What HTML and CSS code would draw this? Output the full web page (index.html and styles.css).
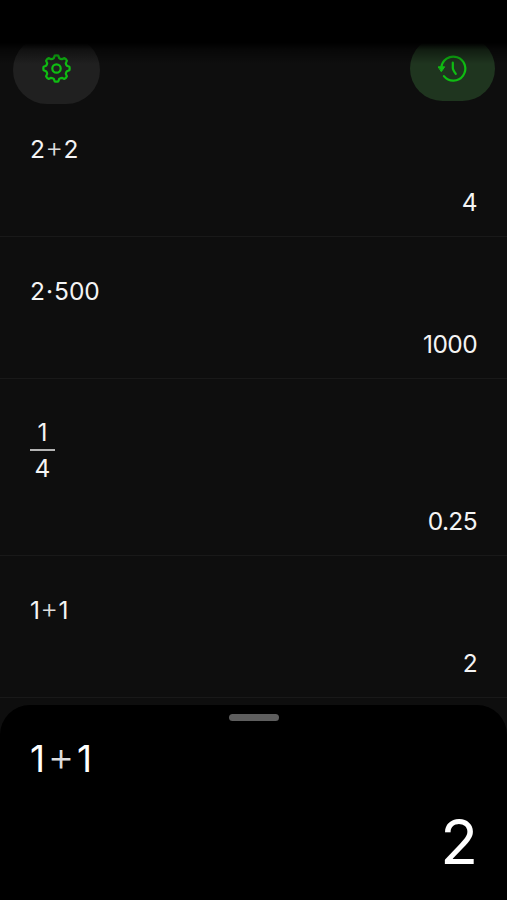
FILE: index.html
```html
<!DOCTYPE html>
<html lang="en">
<head>
<meta charset="utf-8">
<title>Calculator</title>
<link rel="stylesheet" href="styles.css">
</head>
<body>
<div class="screen">
  <div class="fade"></div>
  <header class="toolbar">
    <button class="tool" aria-label="Settings">
      <svg width="30" height="30" viewBox="-14.5 -14.5 30 30">
        <path d="M-1.8-12.9Q0-13.4 1.8-12.9L2.7-10.4Q3.9-9.4 5.4-9.3L7.8-10.4Q9.6-9.6 10.4-7.8L9.3-5.4Q9.4-3.9 10.4-2.7L12.9-1.8Q13.4 0 12.9 1.8L10.4 2.7Q9.4 3.9 9.3 5.4L10.4 7.8Q9.6 9.6 7.8 10.4L5.4 9.3Q3.9 9.4 2.7 10.4L1.8 12.9Q0 13.4-1.8 12.9L-2.7 10.4Q-3.9 9.4-5.4 9.3L-7.8 10.4Q-9.6 9.6-10.4 7.8L-9.3 5.4Q-9.4 3.9-10.4 2.7L-12.9 1.8Q-13.4 0-12.9-1.8L-10.4-2.7Q-9.4-3.9-9.3-5.4L-10.4-7.8Q-9.6-9.6-7.8-10.4L-5.4-9.3Q-3.9-9.4-2.7-10.4Z"/>
        <circle r="4.2"/>
      </svg>
    </button>
    <button class="tool tool-active" aria-label="History">
      <svg width="30" height="30" viewBox="-14.5 -15 30 30">
        <path d="M-11.2-1A12 12 0 1 1-8.6 7.1"/>
        <path d="M.3-6.4V-1Q.3.8 3.3 4.9"/>
        <path class="arrow" d="M-14-2.2H-7.8L-11 2.4Z"/>
      </svg>
    </button>
  </header>
  <main class="history">
    <section class="entry">
      <div class="expr">2<span class="op">+</span>2</div>
      <div class="result">4</div>
    </section>
    <section class="entry">
      <div class="expr">2<span class="dot">·</span>500</div>
      <div class="result">1000</div>
    </section>
    <section class="entry">
      <div class="fraction"><span class="num">1</span><span>4</span></div>
      <div class="result">0.25</div>
    </section>
    <section class="entry">
      <div class="expr">1<span class="op">+</span>1</div>
      <div class="result">2</div>
    </section>
  </main>
  <section class="panel">
    <div class="handle"></div>
    <div class="panel-expr">1<span class="op">+</span>1</div>
    <div class="panel-result">2</div>
  </section>
</div>
</body>
</html>
```
FILE: styles.css
```css
* { box-sizing: border-box; }
body { margin: 0; background: #0e0e0e; color: #f4f4f4; font-family: Inter, "Liberation Sans", sans-serif; }

.screen { display: flex; flex-direction: column; height: 900px; position: relative; overflow: hidden; }

/* status bar area, shades the top of the buttons */
.fade { position: absolute; top: 0; left: 0; right: 0; height: 64px; background: linear-gradient(#000 43px, rgba(0,0,0,.45) 50px, rgba(0,0,0,0) 64px); }

.toolbar { height: 95px; flex: none; padding: 36px 12px 0 13px; display: flex; justify-content: space-between; align-items: flex-start; }
.tool { width: 87px; height: 68px; padding: 0 0 3px; border: 0; border-radius: 34px; background: #202020; display: flex; align-items: center; justify-content: center; }
.tool-active { width: 85px; height: 65px; padding: 0; background: #1f351f; }
.tool svg { fill: none; stroke: #0fbd12; stroke-width: 2.2; stroke-linejoin: round; stroke-linecap: round; }
.tool .arrow { fill: #0fbd12; stroke-width: 1; }

.entry { padding: 37.5px 30px 18px 30px; border-bottom: 1px solid #191919; font-size: 24.5px; line-height: 32px; height: 142px; display: flex; flex-direction: column; justify-content: space-between; }
.entry:nth-child(3) { height: 177px; padding-top: 36px; }
.result { text-align: right; letter-spacing: -.6px; }
.op { font-weight: 300; font-size: 1.12em; line-height: 0; vertical-align: .02em; margin: 0 .01em; color: #ddd; }
.dot { margin: 0 1px; }

.fraction { width: 25px; text-align: center; }
.fraction span { display: block; line-height: 35px; }
.fraction .num { line-height: 34px; border-bottom: 2px solid #b4b4b4; }

.panel { margin-top: 7px; flex: 1; background: #000; border-radius: 30px 30px 0 0; padding: 9px 29px 0 30px; color: #fff; }
.handle { width: 50px; height: 7px; margin: 0 auto; border-radius: 4px; background: #5e5e5e; }
.panel-expr { margin-top: 16px; font-size: 37px; line-height: 44px; }
.panel-expr .op { margin: 0 .06em; }
.panel-result { margin-top: 24px; font-size: 62px; line-height: 74px; text-align: right; }
```
